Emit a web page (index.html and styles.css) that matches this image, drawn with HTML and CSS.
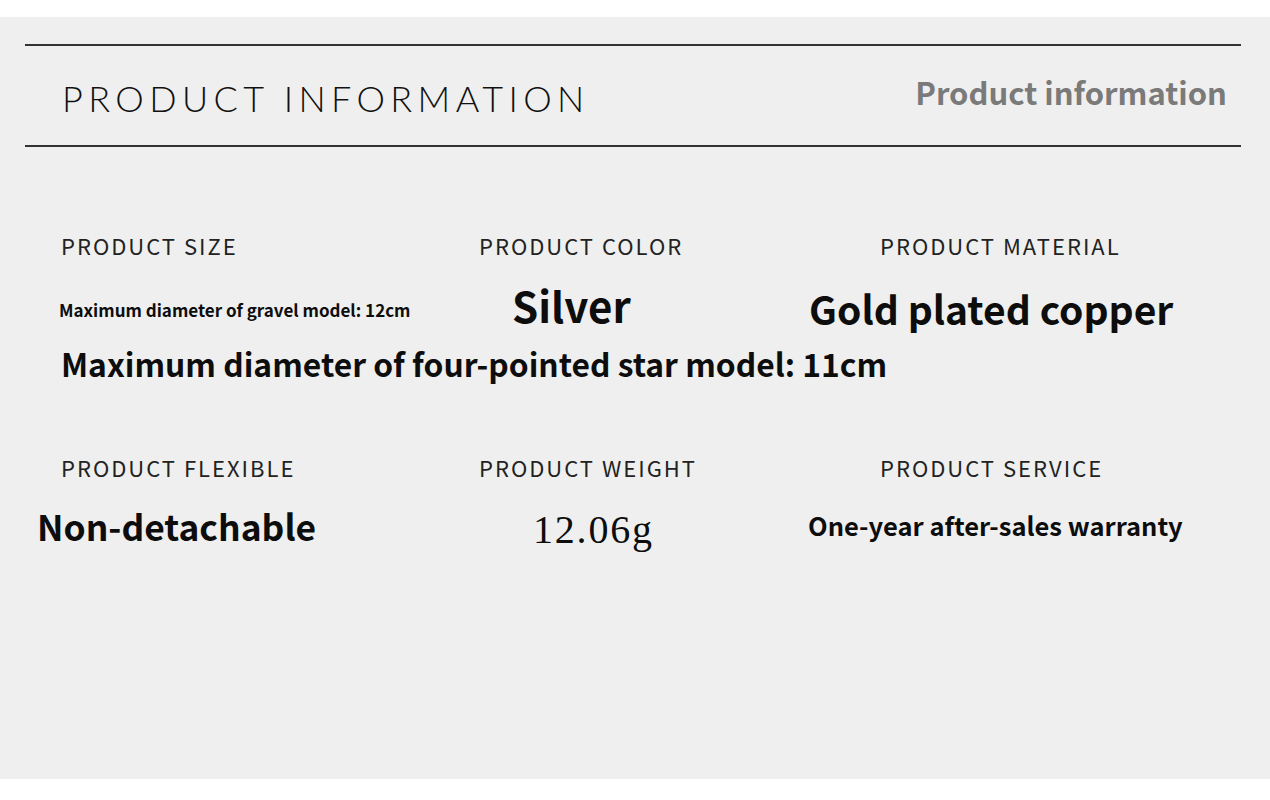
FILE: index.html
```html
<!DOCTYPE html>
<html lang="en">
<head>
<meta charset="utf-8">
<title>Product information</title>
<link rel="stylesheet" href="styles.css">
</head>
<body>
<div class="panel">
  <header class="head">
    <h1 class="title">PRODUCT INFORMATION</h1>
    <div class="subtitle">Product information</div>
  </header>
  <section class="specs">
    <div class="cell c1">
      <div class="label">PRODUCT SIZE</div>
      <div class="val v-gravel">Maximum diameter of gravel model: 12cm</div>
    </div>
    <div class="cell c2">
      <div class="label">PRODUCT COLOR</div>
      <div class="val v-silver">Silver</div>
    </div>
    <div class="cell c3">
      <div class="label">PRODUCT MATERIAL</div>
      <div class="val v-gold">Gold plated copper</div>
    </div>
    <div class="val v-star">Maximum diameter of four-pointed star model: 11cm</div>

    <div class="cell c1 row2">
      <div class="label">PRODUCT FLEXIBLE</div>
      <div class="val v-non">Non-detachable</div>
    </div>
    <div class="cell c2 row2">
      <div class="label">PRODUCT WEIGHT</div>
      <div class="val v-weight">12.06g</div>
    </div>
    <div class="cell c3 row2">
      <div class="label">PRODUCT SERVICE</div>
      <div class="val v-service">One-year after-sales warranty</div>
    </div>
  </section>
</div>
</body>
</html>
```

FILE: styles.css
```css
html, body {
  margin: 0;
  padding: 0;
  background: #ffffff;
}
body {
  font-family: "Noto Sans CJK SC", "Noto Sans", sans-serif;
  color: #111;
}
.panel {
  margin-top: 17px;
  height: 762px;
  background: #efefef;
  overflow: hidden;
}
.head {
  margin: 27px 29px 0 25px;
  height: 99px;
  border-top: 2px solid #333;
  border-bottom: 2px solid #333;
  display: flex;
  justify-content: space-between;
  align-items: center;
}
.title {
  margin: 0 0 0 37px;
  font-family: "Lato", sans-serif;
  font-weight: 300;
  font-size: 36px;
  letter-spacing: 5.4px;
  color: #111;
  padding-top: 4px;
}
.subtitle {
  margin-right: 14px;
  font-weight: 700;
  font-size: 31px;
  color: #7a7a7a;
  padding-bottom: 8px;
}
.specs {
  display: grid;
  grid-template-columns: 418px 401px 1fr;
  padding: 83px 0 0 61px;
}
.label {
  font-family: "Noto Sans CJK SC", sans-serif;
  font-size: 22px;
  letter-spacing: 2px;
  color: #222;
  line-height: 30px;
}
.val {
  font-weight: 700;
  color: #0d0d0d;
}
.v-gravel {
  font-size: 17px;
  margin: 40px 0 0 -2px;
  line-height: 20px;
}
.v-silver {
  font-size: 42px;
  line-height: 48px;
  margin: 21px 0 0 33px;
}
.v-gold {
  font-size: 39px;
  line-height: 46px;
  margin: 25px 0 0 -71px;
}
.v-star {
  grid-column: 1 / -1;
  font-size: 31.8px;
  line-height: 40px;
  margin-top: 12px;
}
.row2 {
  margin-top: 69px;
}
.v-non {
  font-size: 35.4px;
  line-height: 44px;
  margin: 22px 0 0 -24px;
}
.v-weight {
  font-family: "Liberation Serif", serif;
  font-weight: 400;
  font-size: 40px;
  letter-spacing: 1.8px;
  line-height: 40px;
  margin: 28px 0 0 54px;
}
.v-service {
  font-size: 25.5px;
  line-height: 30px;
  margin: 28px 0 0 -72px;
}
```
